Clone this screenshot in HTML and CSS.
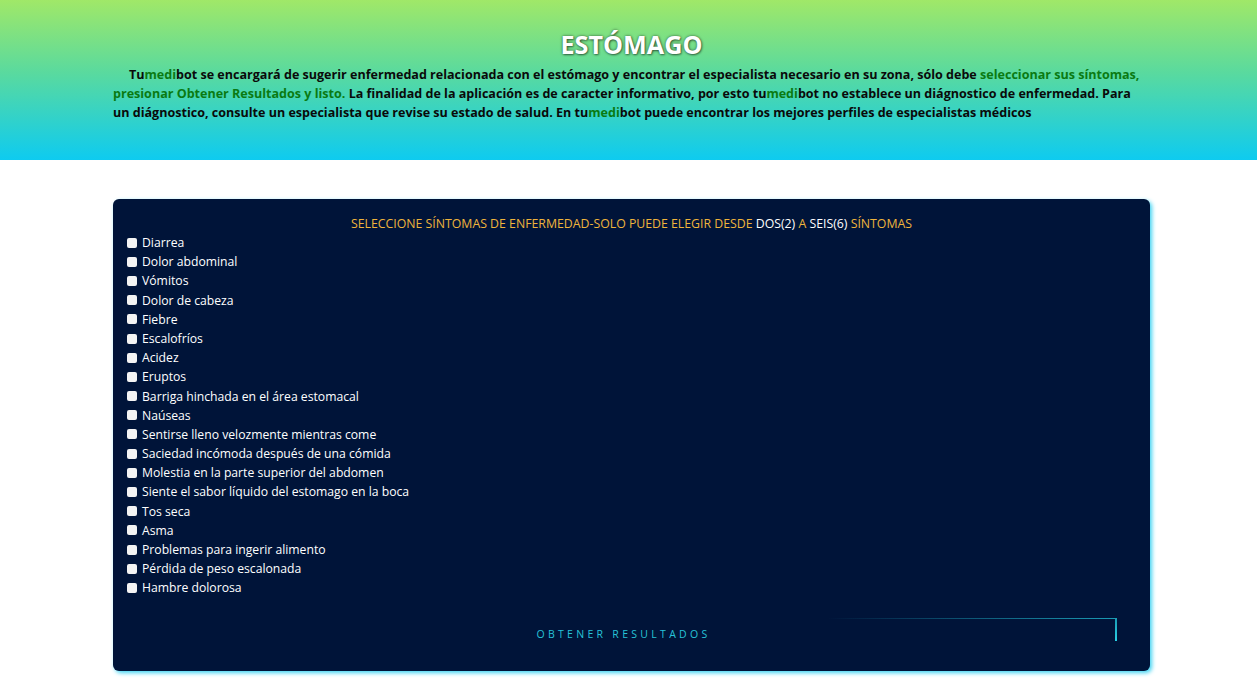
FILE: index.html
```html
<!DOCTYPE html>
<html lang="es">
<head>
<meta charset="utf-8">
<title>Estómago - tumedibot</title>
<link rel="stylesheet" href="styles.css">
</head>
<body>
<header class="hero">
  <h1 class="hero-title">ESTÓMAGO</h1>
  <p class="hero-text">Tu<span class="g">medi</span>bot se encargará de sugerir enfermedad relacionada con el estómago y encontrar el especialista necesario en su zona, sólo debe <span class="g">seleccionar sus síntomas, presionar Obtener Resultados y listo.</span> La finalidad de la aplicación es de caracter informativo, por esto tu<span class="g">medi</span>bot no establece un diágnostico de enfermedad. Para un diágnostico, consulte un especialista que revise su estado de salud. En tu<span class="g">medi</span>bot puede encontrar los mejores perfiles de especialistas médicos</p>
</header>
<main class="main">
  <form class="card">
    <h2 class="card-title">SELECCIONE SÍNTOMAS DE ENFERMEDAD-SOLO PUEDE ELEGIR DESDE <span class="w">DOS(2)</span> A <span class="w">SEIS(6)</span> SÍNTOMAS</h2>
    <ul class="list">
      <li><label><input type="checkbox"> Diarrea</label></li>
      <li><label><input type="checkbox"> Dolor abdominal</label></li>
      <li><label><input type="checkbox"> Vómitos</label></li>
      <li><label><input type="checkbox"> Dolor de cabeza</label></li>
      <li><label><input type="checkbox"> Fiebre</label></li>
      <li><label><input type="checkbox"> Escalofríos</label></li>
      <li><label><input type="checkbox"> Acidez</label></li>
      <li><label><input type="checkbox"> Eruptos</label></li>
      <li><label><input type="checkbox"> Barriga hinchada en el área estomacal</label></li>
      <li><label><input type="checkbox"> Naúseas</label></li>
      <li><label><input type="checkbox"> Sentirse lleno velozmente mientras come</label></li>
      <li><label><input type="checkbox"> Saciedad incómoda después de una cómida</label></li>
      <li><label><input type="checkbox"> Molestia en la parte superior del abdomen</label></li>
      <li><label><input type="checkbox"> Siente el sabor líquido del estomago en la boca</label></li>
      <li><label><input type="checkbox"> Tos seca</label></li>
      <li><label><input type="checkbox"> Asma</label></li>
      <li><label><input type="checkbox"> Problemas para ingerir alimento</label></li>
      <li><label><input type="checkbox"> Pérdida de peso escalonada</label></li>
      <li><label><input type="checkbox"> Hambre dolorosa</label></li>
    </ul>
    <div class="actions">
      <button type="button" class="neon">OBTENER RESULTADOS</button>
    </div>
  </form>
</main>
</body>
</html>
```

FILE: styles.css
```css
* { box-sizing: border-box; }
html, body { margin: 0; padding: 0; background: #ffffff; }
body { font-family: "Open Sans", "Noto Sans", sans-serif; }

.hero {
  height: 160px;
  background: linear-gradient(180deg, #a0e868 0%, #5ada9e 45%, #0ecbf0 100%);
  padding: 30px 107px 0 113px;
}
.hero-title {
  margin: 0;
  text-align: center;
  font-family: "Open Sans", sans-serif;
  font-weight: 700;
  font-size: 25.2px;
  line-height: 28px;
  color: #ffffff;
  text-shadow: 0 0 3px rgba(0,0,0,0.55), 1px 1px 2px rgba(0,0,0,0.4);
}
.hero-text {
  margin: 7px 6px 0 0;
  text-indent: 16px;
  font-family: "Open Sans", sans-serif;
  font-weight: 700;
  font-size: 12.55px;
  line-height: 19px;
  color: #0a0a0a;
}
.g { color: #0a7a12; }

.main { padding: 39px 0 20px 113px; }
.card {
  width: 1037px;
  height: 472px;
  background: #001439;
  border-radius: 6px;
  box-shadow: 2px 2px 4px #3fd3f2;
  padding: 16px 14px 0 14px;
  display: flex;
  flex-direction: column;
}
.card-title {
  margin: 0 0 1px 0;
  text-align: center;
  font-weight: 400;
  font-size: 12.3px;
  line-height: 17px;
  color: #f0b43c;
}
.w { color: #ffffff; }
.list {
  list-style: none;
  margin: 0;
  padding: 0;
}
.list li {
  height: 19.2px;
  line-height: 19.2px;
  font-size: 12.2px;
  color: #ffffff;
}
.list label { display: flex; align-items: center; gap: 5px; }
.list input {
  appearance: none;
  -webkit-appearance: none;
  margin: 0;
  width: 10px;
  height: 10px;
  background: #f4f4f4;
  border-radius: 2px;
  flex: none;
}
.actions {
  margin-top: 20px;
  padding-right: 19px;
}
.neon {
  position: relative;
  width: 100%;
  height: 32px;
  background: transparent;
  border: 0;
  font-family: "Open Sans", sans-serif;
  font-size: 10.5px;
  letter-spacing: 3.3px;
  color: #27c3d8;
  padding: 0 0 0 3px;
  cursor: pointer;
}
.neon::before {
  content: "";
  position: absolute;
  top: 0;
  right: 0;
  width: 290px;
  height: 1px;
  background: linear-gradient(90deg, rgba(23,168,196,0) 0%, #1a9bb4 100%);
}
.neon::after {
  content: "";
  position: absolute;
  top: 0;
  right: 0;
  width: 2px;
  height: 23px;
  background: linear-gradient(180deg, #1a9bb4 0%, #2ad0e6 100%);
}
```
